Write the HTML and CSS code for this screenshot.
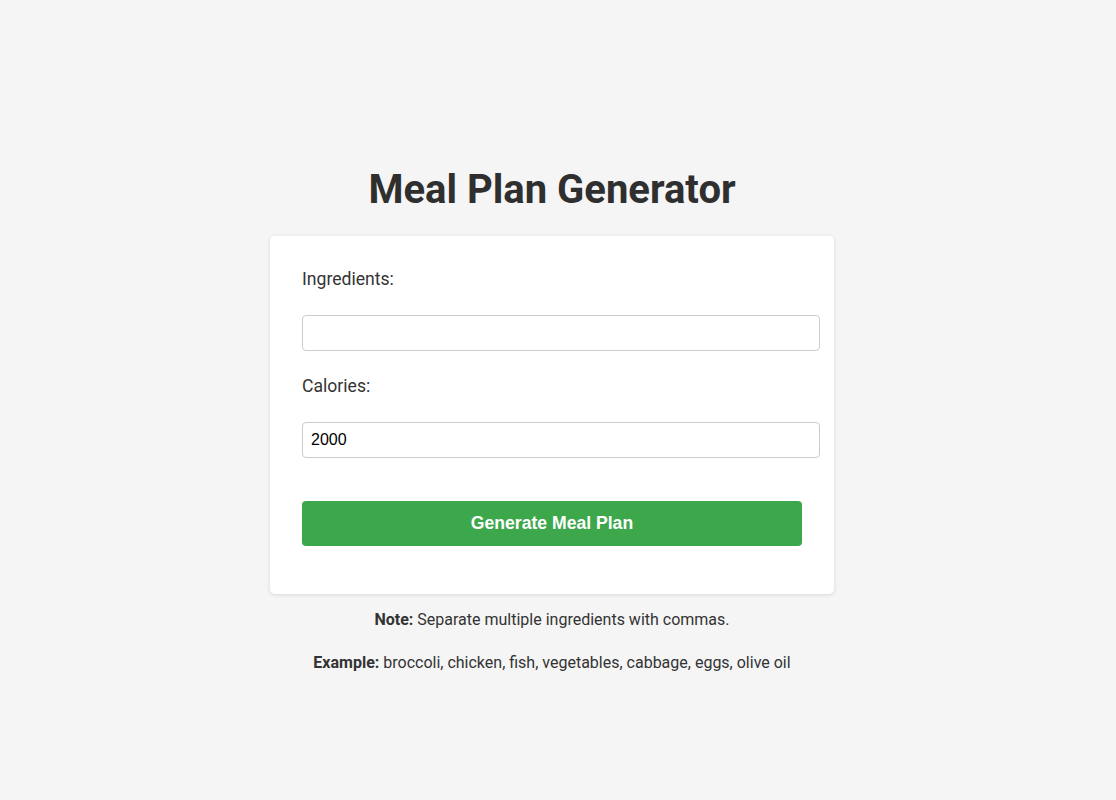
FILE: index.html
```html
<!DOCTYPE html>
<html lang="en">
<head>
<meta charset="utf-8">
<title>Meal Plan Generator</title>
<link rel="stylesheet" href="styles.css">
</head>
<body>
<main class="page">
  <h1 class="title">Meal Plan Generator</h1>
  <form class="card">
    <label class="label" for="ingredients">Ingredients:</label>
    <input class="field" id="ingredients" type="text">
    <label class="label" for="calories">Calories:</label>
    <input class="field field-last" id="calories" type="number" value="2000">
    <button class="btn" type="button">Generate Meal Plan</button>
  </form>
  <p class="note"><strong>Note:</strong> Separate multiple ingredients with commas.</p>
  <p class="note"><strong>Example:</strong> broccoli, chicken, fish, vegetables, cabbage, eggs, olive oil</p>
</main>
</body>
</html>
```
FILE: styles.css
```css
html, body {
  margin: 0;
  padding: 0;
}
body {
  background: #f5f5f5;
  color: #333;
  font-family: Roboto, "Noto Sans", sans-serif;
  font-size: 16px;
  line-height: 1.6;
}
.page {
  min-height: 800px;
  display: flex;
  flex-direction: column;
  align-items: center;
  justify-content: center;
  box-sizing: border-box;
  padding: 41px 12px 0 0;
}
.title {
  font-size: 40px;
  font-weight: 700;
  line-height: 48px;
  margin: 0 0 22px;
  color: #2f2f2f;
}
.card {
  background: #fff;
  width: 500px;
  padding: 29px 32px 48px;
  border-radius: 5px;
  box-shadow: 0 1px 4px rgba(0, 0, 0, 0.12);
}
.label {
  display: block;
  font-size: 17.6px;
  line-height: 28px;
  margin-bottom: 22px;
}
.field {
  display: block;
  width: 100%;
  padding: 8px;
  border: 1px solid #ccc;
  border-radius: 4px;
  font-family: "Liberation Sans", Arial, sans-serif;
  font-size: 16px;
  color: #000;
  margin: 0 0 21px;
  box-sizing: content-box;
  height: 18px;
  -moz-appearance: textfield;
  appearance: textfield;
}
.field::-webkit-outer-spin-button,
.field::-webkit-inner-spin-button {
  -webkit-appearance: none;
  margin: 0;
}
.field-last {
  margin-bottom: 43px;
}
.btn {
  display: block;
  width: 100%;
  height: 45px;
  background: #3da74c;
  color: #fff;
  border: none;
  border-radius: 4px;
  font-family: "Liberation Sans", Arial, sans-serif;
  font-size: 17.6px;
  font-weight: 700;
  cursor: pointer;
}
.note {
  margin: 17px 0 0;
  text-align: center;
}
.card + .note {
  margin-top: 13px;
}
```
